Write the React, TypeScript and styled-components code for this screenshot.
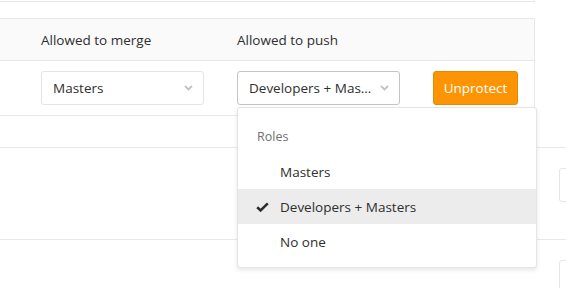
import React from "react";
import styled, { createGlobalStyle } from "styled-components";

const Global = createGlobalStyle`
  html, body { margin: 0; padding: 0; background: #fff; }
  body {
    font-family: "Open Sans", "Noto Sans", sans-serif;
    font-size: 13.5px;
    color: #2e2e2e;
    overflow: hidden;
    width: 566px;
    height: 288px;
  }
  * { box-sizing: border-box; }
`;

const Page = styled.div`
  position: relative;
  width: 566px;
  height: 288px;
  overflow: hidden;
`;

const TopEdge = styled.div`
  width: 535px;
  height: 2px;
  border-bottom: 1px solid #e8e8e8;
  border-right: 1px solid #e8e8e8;
`;

const Table = styled.div`
  margin-top: 16px;
  width: 535px;
  border-top: 1px solid #e8e8e8;
  border-right: 1px solid #e8e8e8;
  position: relative;
  z-index: 2;
`;

const HeaderRow = styled.div`
  display: grid;
  grid-template-columns: 41px 196px 196px 1fr;
  height: 42px;
  background: #fafafa;
  border-bottom: 1px solid #e8e8e8;
  align-items: center;
`;

const HeaderCell = styled.div`
  font-size: 13.5px;
  color: #2e2e2e;
  line-height: 20px;
  white-space: nowrap;
`;

const BodyRow = styled.div`
  display: grid;
  grid-template-columns: 41px 196px 196px 1fr;
  height: 55px;
  padding-top: 10px;
  border-bottom: 1px solid #e8e8e8;
  align-items: start;
`;

const Cell = styled.div`
  position: relative;
`;

const Select = styled.div<{ $open?: boolean }>`
  width: 163px;
  height: 34px;
  border: 1px solid ${(p) => (p.$open ? "#c4c4c4" : "#e5e5e5")};
  border-radius: 3px;
  background: #fff;
  display: flex;
  align-items: center;
  padding: 0 10px 0 11px;
  gap: 6px;
`;

const SelectText = styled.span`
  flex: 1;
  min-width: 0;
  overflow: hidden;
  text-overflow: ellipsis;
  white-space: nowrap;
  font-size: 13.5px;
  color: #2e2e2e;
`;

const Chevron = () => (
  <svg width="9" height="6" viewBox="0 0 9 6" style={{ flexShrink: 0 }}>
    <path d="M1 1 L4.5 4.5 L8 1" fill="none" stroke="#c2c2c2" strokeWidth="1.8" />
  </svg>
);

const Button = styled.button`
  width: 85px;
  height: 34px;
  border: 1px solid #e58a00;
  border-radius: 3px;
  background: #fc9403;
  color: #fff;
  font-family: "Open Sans", "Noto Sans", sans-serif;
  font-size: 13.5px;
  padding: 0;
  cursor: pointer;
`;

const Dropdown = styled.div`
  position: absolute;
  left: 0;
  top: 36px;
  width: 300px;
  height: 161px;
  background: #fff;
  border: 1px solid #e5e5e5;
  border-radius: 3px;
  box-shadow: 0 2px 4px rgba(0, 0, 0, 0.1);
  padding: 8px 0;
  z-index: 10;
`;

const DropHeader = styled.div`
  height: 38px;
  display: flex;
  align-items: center;
  padding: 2px 0 0 19px;
  font-size: 12.5px;
  color: #707070;
`;

const Item = styled.div<{ $active?: boolean }>`
  height: 35px;
  display: flex;
  align-items: center;
  background: ${(p) => (p.$active ? "#ececec" : "transparent")};
  font-size: 13.5px;
  color: #2e2e2e;
  white-space: nowrap;
`;

const CheckSlot = styled.span`
  width: 42px;
  display: flex;
  justify-content: flex-end;
  padding-right: 11px;
`;

const Check = () => (
  <svg width="13" height="10" viewBox="0 0 13 10">
    <path d="M1.2 5.2 L4.6 8.4 L11.8 1.4" fill="none" stroke="#2e2e2e" strokeWidth="2.6" strokeLinejoin="miter" />
  </svg>
);

const Lower = styled.div`
  margin-top: 31px;
`;

const LowerRow = styled.div`
  height: 92px;
  border-top: 1px solid #e8e8e8;
  display: flex;
  padding-top: 20px;
  padding-left: 559px;
`;

const GhostBox = styled.div`
  width: 80px;
  height: 34px;
  flex-shrink: 0;
  border: 1px solid #e5e5e5;
  border-radius: 3px;
`;

export default function App() {
  return (
    <>
      <Global />
      <Page>
        <TopEdge />
        <Table>
          <HeaderRow>
            <span />
            <HeaderCell>Allowed to merge</HeaderCell>
            <HeaderCell>Allowed to push</HeaderCell>
            <span />
          </HeaderRow>
          <BodyRow>
            <span />
            <Cell>
              <Select>
                <SelectText>Masters</SelectText>
                <Chevron />
              </Select>
            </Cell>
            <Cell>
              <Select $open>
                <SelectText>Developers + Masters</SelectText>
                <Chevron />
              </Select>
              <Dropdown>
                <DropHeader>Roles</DropHeader>
                <Item>
                  <CheckSlot />
                  Masters
                </Item>
                <Item $active>
                  <CheckSlot>
                    <Check />
                  </CheckSlot>
                  Developers + Masters
                </Item>
                <Item>
                  <CheckSlot />
                  No one
                </Item>
              </Dropdown>
            </Cell>
            <Cell>
              <Button>Unprotect</Button>
            </Cell>
          </BodyRow>
        </Table>
        <Lower>
          <LowerRow>
            <GhostBox />
          </LowerRow>
          <LowerRow>
            <GhostBox />
          </LowerRow>
        </Lower>
      </Page>
    </>
  );
}
